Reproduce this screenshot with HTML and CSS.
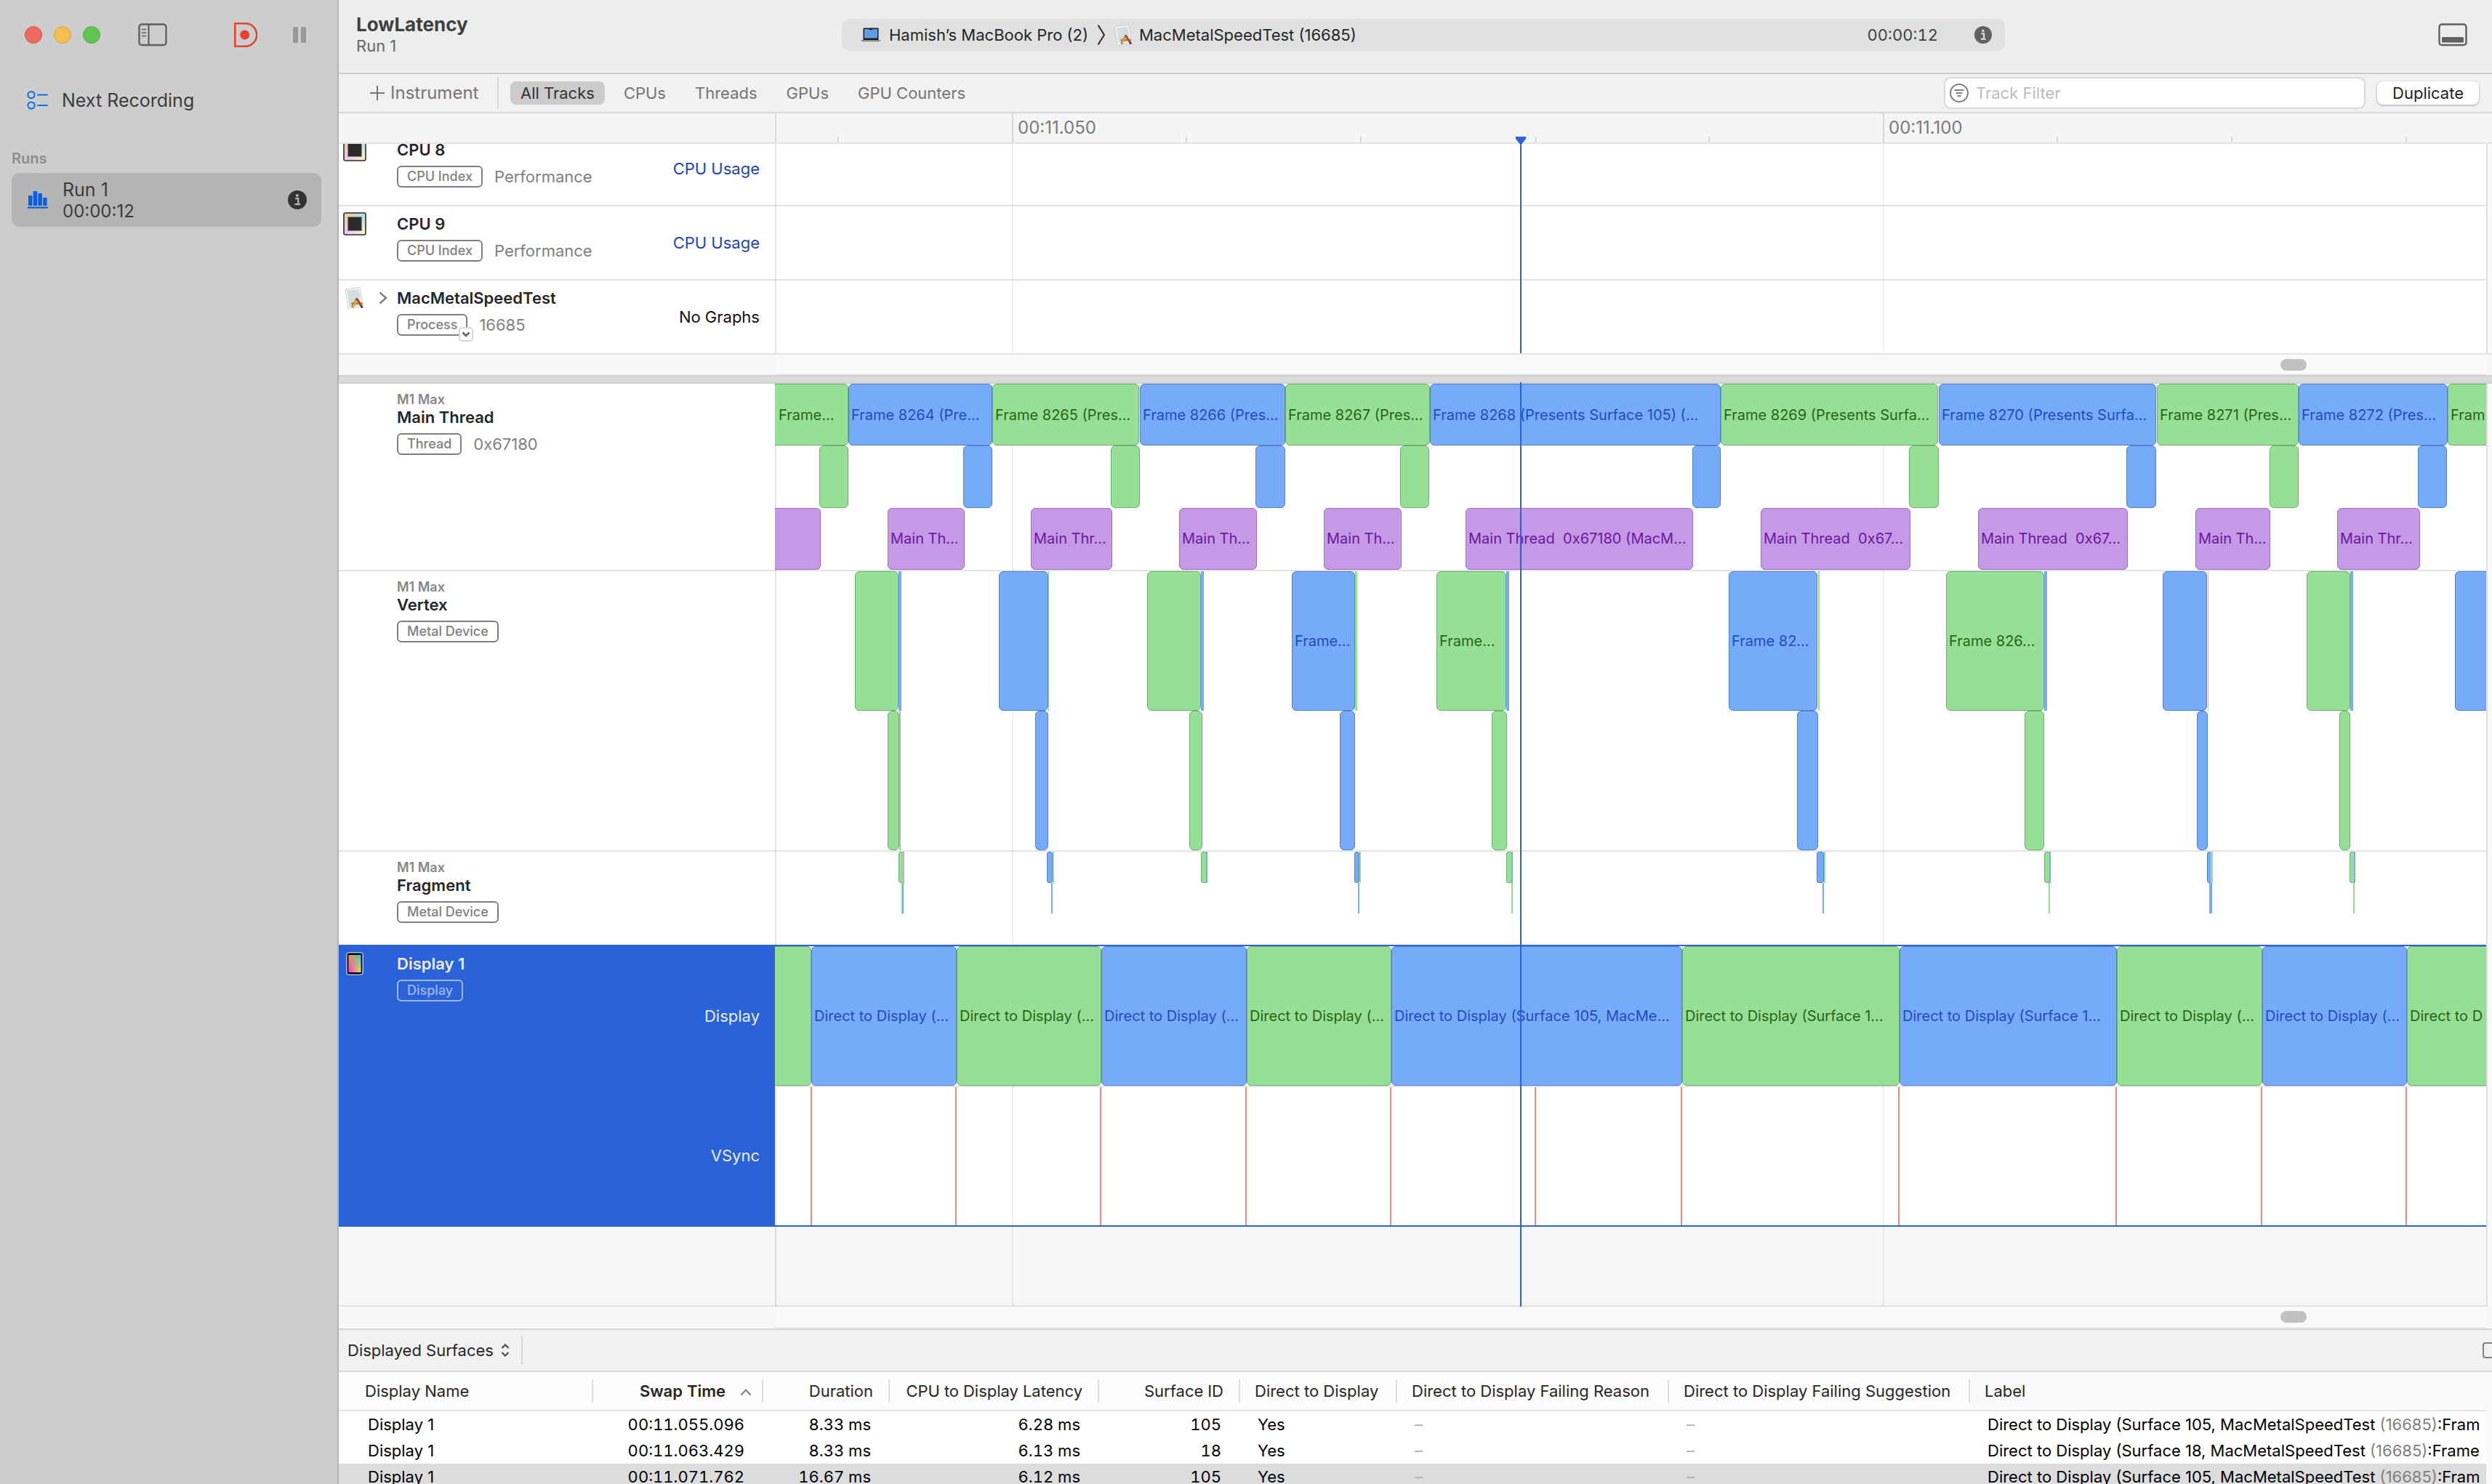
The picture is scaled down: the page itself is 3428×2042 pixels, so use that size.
FILE: index.html
```html
<!DOCTYPE html>
<html lang="en">
<head>
<meta charset="utf-8">
<title>LowLatency – Run 1</title>
<link rel="stylesheet" href="styles.css">
</head>
<body>
<svg class="defs" aria-hidden="true">
  <defs>
    <linearGradient id="chip-a" x1="0" y1="0" x2="1" y2="0"><stop offset="0" stop-color="#f9cf8f"/><stop offset="1" stop-color="#9fe4f5"/></linearGradient>
    <linearGradient id="chip-b" x1="0" y1="0" x2="1" y2="0"><stop offset="0" stop-color="#eec0fb"/><stop offset="1" stop-color="#fbf8b8"/></linearGradient>
    <linearGradient id="chip-fade" x1="0" y1="0" x2="0" y2="1"><stop offset="0.1" stop-color="#000"/><stop offset="0.9" stop-color="#fff"/></linearGradient>
    <mask id="chip-mask"><rect width="32" height="32" fill="url(#chip-fade)"/></mask>
    <linearGradient id="disp-a" x1="0" y1="0" x2="1" y2="0"><stop offset="0" stop-color="#f7a022"/><stop offset="1" stop-color="#35c4e8"/></linearGradient>
    <linearGradient id="disp-b" x1="0" y1="0" x2="1" y2="0"><stop offset="0" stop-color="#f02af0"/><stop offset="1" stop-color="#f6e832"/></linearGradient>
    <symbol id="chip" viewBox="0 0 32 32">
      <rect x="1" y="1" width="30" height="30" rx="2" fill="url(#chip-a)"/>
      <rect x="1" y="1" width="30" height="30" rx="2" fill="url(#chip-b)" mask="url(#chip-mask)"/>
      <rect x="1" y="1" width="30" height="30" rx="2" fill="none" stroke="#2d2a2e" stroke-width="1.6"/>
      <rect x="6.500" y="6.500" width="19" height="19" fill="#2d2a2e" stroke="#8d8a8a" stroke-width="0.8"/>
    </symbol>
    <symbol id="app" viewBox="0 0 32 32">
      <path d="M3 4 23 1.500 27 27 7 30.500Z" fill="#fff" stroke="#c9cccd" stroke-width="1"/>
      <path d="M5 5.500 21.700 3.400 25 25.500 8.500 28.300Z" fill="#d3dee3"/>
      <path d="M11 22h16v3.500H11Z" fill="#d8a765"/>
      <path d="M11 23.500h16" stroke="#a9773c" stroke-width="1"/>
      <path d="M19.500 16.500 12.500 29" stroke="#7c5a1e" stroke-width="3.200"/>
      <path d="M19.500 17 13 28.500" stroke="#f3c63f" stroke-width="1.800"/>
      <path d="M18.500 16.500 26.500 29.500" stroke="#a8422a" stroke-width="2.800"/>
      <path d="M24.500 26.500 26.500 29.500" stroke="#444" stroke-width="2.600"/>
    </symbol>
    <symbol id="info" viewBox="0 0 26 26">
      <circle cx="13" cy="13" r="13" fill="currentColor"/>
      <circle cx="12.800" cy="7" r="1.900" fill="var(--hole)"/>
      <path d="M10 11.200h4.200V19M9.600 19.200h7.400" fill="none" stroke="var(--hole)" stroke-width="2.200"/>
    </symbol>
  </defs>
</svg>

<div class="app">
  <aside class="sidebar">
    <div class="window-bar">
      <button class="light close" aria-label="Close"></button>
      <button class="light minimize" aria-label="Minimize"></button>
      <button class="light zoom" aria-label="Zoom"></button>
      <button class="icon-button sidebar-toggle" aria-label="Toggle sidebar">
        <svg width="40" height="32" viewBox="0 0 40 32" fill="none" stroke="#5f5f5f"><rect x="1.500" y="1.500" width="37" height="28.500" rx="3.500" stroke-width="2.400"/><path d="M14.500 2v28" stroke-width="2.200"/><path d="M5.500 8.500h5M5.500 13h5M5.500 17.500h5" stroke-width="1.600" stroke-linecap="round"/></svg>
      </button>
      <button class="icon-button record" aria-label="Record">
        <svg width="32" height="34" viewBox="0 0 32 34"><path d="M1.300 1.300h14.200a15.700 15.700 0 0 1 0 31.400H1.300Z" fill="none" stroke="#e3432f" stroke-width="2.600"/><circle cx="14.700" cy="17" r="6.500" fill="#e3432f"/></svg>
      </button>
      <button class="icon-button pause" aria-label="Pause">
        <svg width="18" height="22" viewBox="0 0 18 22" fill="#989898"><rect width="7" height="22" rx="1.500"/><rect x="11" width="7" height="22" rx="1.500"/></svg>
      </button>
    </div>
    <a class="next-recording" href="#next">
      <svg width="30" height="28" viewBox="0 0 30 28" fill="none" stroke="#0a6cf0" stroke-width="2"><circle cx="6" cy="6.500" r="4.600"/><circle cx="6" cy="21" r="4.600"/><path d="M15 6.500h13M15 21h13" stroke-linecap="round"/></svg>
      <span>Next Recording</span>
    </a>
    <h2 class="sidebar-heading">Runs</h2>
    <a class="run" href="#run-1">
      <svg width="28" height="24" viewBox="0 0 28 24" fill="#0a5fe0"><rect x="1" y="6" width="5.500" height="14" rx="1"/><rect x="7.700" y="0" width="5.500" height="20" rx="1"/><rect x="14.400" y="3" width="5.500" height="17" rx="1"/><rect x="21.100" y="9" width="5.500" height="11" rx="1"/><rect x="0" y="21.500" width="28" height="2.200"/></svg>
      <span class="run-text"><span>Run 1</span><time>00:00:12</time></span>
      <svg class="run-info" width="26" height="26"><use href="#info"/></svg>
    </a>
  </aside>

  <main class="main">
    <header class="title-bar">
      <div class="title">
        <h1>LowLatency</h1>
        <p>Run 1</p>
      </div>
      <div class="target">
        <svg width="28" height="20" viewBox="0 0 28 20"><path d="M3.500 1.500a1 1 0 0 1 1-1h19a1 1 0 0 1 1 1V17h-21Z" fill="#1b1b1d"/><rect x="5" y="2" width="18" height="12.500" fill="#5b9ee6"/><rect x="11.500" y="1" width="5" height="2" fill="#1b1b1d"/><path d="M0 17h28l-2 2.200H2Z" fill="#8c8d8e"/></svg>
        <span class="device">Hamish’s MacBook Pro (2)</span>
        <svg class="crumb" width="12" height="30" viewBox="0 0 12 30" fill="none" stroke="#2a2a2a" stroke-width="2"><path d="M1.500 1.500 10 15 1.500 28.500"/></svg>
        <svg width="30" height="30"><use href="#app"/></svg>
        <span class="process">MacMetalSpeedTest (16685)</span>
        <time class="elapsed">00:00:12</time>
        <svg class="target-info" width="24" height="24" viewBox="0 0 26 26"><use href="#info"/></svg>
      </div>
      <button class="icon-button detail-toggle" aria-label="Toggle detail area">
        <svg width="40" height="32" viewBox="0 0 40 32"><rect x="1.500" y="1.500" width="37" height="28.500" rx="3.500" fill="none" stroke="#5f6060" stroke-width="2.400"/><rect x="5" y="19" width="30" height="7.500" rx="1.500" fill="#5f6060"/></svg>
      </button>
    </header>

    <nav class="toolbar">
      <button class="add-instrument"><svg width="20" height="20" viewBox="0 0 20 20" stroke="#757575" stroke-width="2"><path d="M10 0v20M0 10h20"/></svg>Instrument</button>
      <div class="tabs">
        <button class="tab selected">All Tracks</button>
        <button class="tab">CPUs</button>
        <button class="tab">Threads</button>
        <button class="tab">GPUs</button>
        <button class="tab">GPU Counters</button>
      </div>
      <label class="filter">
        <svg width="26" height="26" viewBox="0 0 26 26" fill="none" stroke="#808080" stroke-width="2"><circle cx="13" cy="13" r="12"/><path d="M6.500 9h13M8.500 13h9M10.500 17h5"/></svg>
        <input type="text" placeholder="Track Filter" aria-label="Track Filter">
      </label>
      <button class="duplicate">Duplicate</button>
    </nav>

    <div class="ruler">
      <div class="ruler-head"></div>
      <div class="ruler-scale">
        <span class="tick" style="--x:84"></span>
        <span class="tick major" style="--x:324">00:11.050</span>
        <span class="tick" style="--x:563"></span>
        <span class="tick" style="--x:803"></span>
        <span class="tick" style="--x:1044"></span>
        <span class="tick" style="--x:1282"></span>
        <span class="tick major" style="--x:1522">00:11.100</span>
        <span class="tick" style="--x:1761"></span>
        <span class="tick" style="--x:2001"></span>
        <span class="tick" style="--x:2241"></span>
        <span class="playhead-handle" style="--x:1024"></span>
      </div>
    </div>

    <section class="pane upper">
      <div class="grid-lines"><i style="--x:324"></i><i style="--x:1522"></i></div>
      <div class="rows">
        <div class="track">
          <div class="head">
            <svg class="head-icon" width="32" height="32"><use href="#chip"/></svg>
            <div class="head-text"><h3>CPU 8</h3><p><span class="tag">CPU Index</span>Performance</p></div>
            <button class="graph link">CPU Usage</button>
          </div>
        </div>
        <div class="track">
          <div class="head">
            <svg class="head-icon" width="32" height="32"><use href="#chip"/></svg>
            <div class="head-text"><h3>CPU 9</h3><p><span class="tag">CPU Index</span>Performance</p></div>
            <button class="graph link">CPU Usage</button>
          </div>
        </div>
        <div class="track">
          <div class="head">
            <span class="head-icon"><svg width="32" height="32"><use href="#app"/></svg><svg class="disclosure" width="12" height="18" viewBox="0 0 12 18" fill="none" stroke="#808080" stroke-width="2.400"><path d="M1.500 1.500 10 9l-8.500 7.500"/></svg></span>
            <div class="head-text"><h3>MacMetalSpeedTest</h3><p><span class="tag">Process<button class="tag-menu" aria-label="Process options"><svg width="12" height="8" viewBox="0 0 12 8" fill="none" stroke="#666" stroke-width="2.800"><path d="M1.500 1.500 6 6l4.500-4.500"/></svg></button></span>16685</p></div>
            <span class="graph none">No Graphs</span>
          </div>
        </div>
      </div>
      <div class="playhead"><i style="--x:1023"></i></div>
    </section>
    <div class="scroll-strip"><div></div><div class="scroll-area"><span class="thumb" style="--x:2069"></span></div></div>
    <div class="divider"></div>

    <section class="pane lower">
      <div class="grid-lines"><i style="--x:324"></i><i style="--x:1522"></i></div>
      <div class="track thread">
        <div class="head"><div class="head-text"><h4>M1 Max</h4><h3>Main Thread</h3><p><span class="tag">Thread</span>0x67180</p></div></div>
        <div class="plot">
          <div class="lane">
            <span class="slice green cut-left" style="--x:-2;--w:101">Frame…</span>
            <span class="slice blue" style="--x:99;--w:198">Frame 8264 (Pre…</span>
            <span class="slice green" style="--x:297;--w:202">Frame 8265 (Pres…</span>
            <span class="slice blue" style="--x:500;--w:200">Frame 8266 (Pres…</span>
            <span class="slice green" style="--x:700;--w:199">Frame 8267 (Pres…</span>
            <span class="slice blue" style="--x:899;--w:400">Frame 8268 (Presents Surface 105) (…</span>
            <span class="slice green" style="--x:1299;--w:299">Frame 8269 (Presents Surfa…</span>
            <span class="slice blue" style="--x:1599;--w:299">Frame 8270 (Presents Surfa…</span>
            <span class="slice green" style="--x:1899;--w:195">Frame 8271 (Pres…</span>
            <span class="slice blue" style="--x:2094;--w:205">Frame 8272 (Pres…</span>
            <span class="slice green cut-right" style="--x:2299;--w:53">Fram</span>
          </div>
          <div class="lane">
            <span class="slice green" style="--x:59;--w:40"></span>
            <span class="slice blue" style="--x:257;--w:40"></span>
            <span class="slice green" style="--x:460;--w:40"></span>
            <span class="slice blue" style="--x:659;--w:41"></span>
            <span class="slice green" style="--x:858;--w:40"></span>
            <span class="slice blue" style="--x:1260;--w:39"></span>
            <span class="slice green" style="--x:1558;--w:41"></span>
            <span class="slice blue" style="--x:1857;--w:41"></span>
            <span class="slice green" style="--x:2054;--w:40"></span>
            <span class="slice blue" style="--x:2258;--w:40"></span>
          </div>
          <div class="lane">
            <span class="slice purple cut-left" style="--x:-2;--w:63"></span>
            <span class="slice purple" style="--x:153;--w:106">Main Th…</span>
            <span class="slice purple" style="--x:350;--w:112">Main Thr…</span>
            <span class="slice purple" style="--x:554;--w:107">Main Th…</span>
            <span class="slice purple" style="--x:753;--w:107">Main Th…</span>
            <span class="slice purple" style="--x:948;--w:313">Main Thread&nbsp; 0x67180 (MacM…</span>
            <span class="slice purple" style="--x:1354;--w:206">Main Thread&nbsp; 0x67…</span>
            <span class="slice purple" style="--x:1653;--w:206">Main Thread&nbsp; 0x67…</span>
            <span class="slice purple" style="--x:1952;--w:103">Main Th…</span>
            <span class="slice purple" style="--x:2147;--w:114">Main Thr…</span>
          </div>
        </div>
      </div>

      <div class="track vertex">
        <div class="head"><div class="head-text"><h4>M1 Max</h4><h3>Vertex</h3><p><span class="tag">Metal Device</span></p></div></div>
        <div class="plot">
          <div class="lane">
            <span class="slice green" style="--x:108;--w:60"></span><span class="sliver blue" style="--x:168;--w:4"></span>
            <span class="slice blue" style="--x:306;--w:68"></span><span class="sliver green" style="--x:374;--w:1"></span>
            <span class="slice green" style="--x:510;--w:74"></span><span class="sliver blue" style="--x:584;--w:4"></span>
            <span class="slice blue" style="--x:709;--w:87">Frame…</span><span class="sliver green" style="--x:796;--w:3"></span>
            <span class="slice green" style="--x:908;--w:96">Frame…</span><span class="sliver blue" style="--x:1004;--w:4"></span>
            <span class="slice blue" style="--x:1310;--w:122">Frame 82…</span><span class="sliver green" style="--x:1433;--w:2"></span>
            <span class="slice green" style="--x:1609;--w:135">Frame 826…</span><span class="sliver blue" style="--x:1744;--w:4"></span>
            <span class="slice blue" style="--x:1907;--w:61"></span><span class="sliver green" style="--x:1969;--w:1"></span>
            <span class="slice green" style="--x:2105;--w:60"></span><span class="sliver blue" style="--x:2165;--w:4"></span>
            <span class="slice blue cut-right" style="--x:2309;--w:43"></span>
          </div>
          <div class="lane">
            <span class="slice green" style="--x:153;--w:16"></span><span class="sliver gray" style="--x:169;--w:2"></span>
            <span class="slice blue" style="--x:356;--w:18"></span>
            <span class="slice green" style="--x:568;--w:18"></span>
            <span class="slice blue" style="--x:775;--w:21"></span>
            <span class="slice green" style="--x:984;--w:21"></span>
            <span class="slice blue" style="--x:1404;--w:29"></span>
            <span class="slice green" style="--x:1717;--w:27"></span>
            <span class="slice blue" style="--x:1954;--w:15"></span>
            <span class="slice green" style="--x:2150;--w:15"></span>
          </div>
        </div>
      </div>

      <div class="track fragment">
        <div class="head"><div class="head-text"><h4>M1 Max</h4><h3>Fragment</h3><p><span class="tag">Metal Device</span></p></div></div>
        <div class="plot">
          <div class="lane">
            <span class="slice green" style="--x:168;--w:7"></span><span class="sliver gray" style="--x:174;--w:2"></span>
            <span class="slice blue" style="--x:372;--w:8"></span><span class="sliver green" style="--x:380;--w:2"></span>
            <span class="slice green" style="--x:584;--w:8"></span><span class="sliver blue" style="--x:591;--w:2"></span>
            <span class="slice blue" style="--x:795;--w:7"></span><span class="sliver green" style="--x:802;--w:2"></span>
            <span class="slice green" style="--x:1004;--w:8"></span><span class="sliver blue" style="--x:1011;--w:2"></span>
            <span class="slice blue" style="--x:1431;--w:10"></span><span class="sliver green" style="--x:1441;--w:2"></span>
            <span class="slice green" style="--x:1744;--w:8"></span><span class="sliver blue" style="--x:1751;--w:2"></span>
            <span class="slice blue" style="--x:1968;--w:6"></span><span class="sliver green" style="--x:1973;--w:3"></span>
            <span class="slice green" style="--x:2164;--w:7"></span><span class="sliver blue" style="--x:2170;--w:2"></span>
          </div>
          <div class="lane">
            <span class="sliver green" style="--x:172;--w:1"></span><span class="sliver blue" style="--x:173;--w:2"></span>
            <span class="sliver blue" style="--x:378;--w:2"></span>
            <span class="sliver blue" style="--x:800;--w:2"></span>
            <span class="sliver green" style="--x:1011;--w:2"></span>
            <span class="sliver blue" style="--x:1439;--w:2"></span>
            <span class="sliver green" style="--x:1750;--w:2"></span>
            <span class="sliver blue" style="--x:1971;--w:4"></span>
            <span class="sliver green" style="--x:2169;--w:2"></span>
          </div>
          <div class="lane"></div>
        </div>
      </div>

      <div class="track display selected">
        <div class="head">
          <svg class="head-icon screen" width="24" height="32" viewBox="0 0 24 32"><rect x="0.800" y="0.800" width="22.400" height="30.400" rx="3.500" fill="#000" stroke="#a9bff0" stroke-width="1.600"/><rect x="3.500" y="4" width="17" height="24" fill="url(#disp-a)"/><g transform="scale(.75 1)"><rect x="4.700" y="4" width="22.600" height="24" fill="url(#disp-b)" mask="url(#chip-mask)"/></g></svg>
          <div class="head-text"><h3>Display 1</h3><p><span class="tag">Display</span></p></div>
          <div class="lane-names"><span>Display</span><span>VSync</span></div>
        </div>
        <div class="plot">
          <div class="lane">
            <span class="slice green cut-left" style="--x:-2;--w:50"></span>
            <span class="slice blue" style="--x:48;--w:200">Direct to Display (…</span>
            <span class="slice green" style="--x:248;--w:199">Direct to Display (…</span>
            <span class="slice blue" style="--x:447;--w:200">Direct to Display (…</span>
            <span class="slice green" style="--x:647;--w:199">Direct to Display (…</span>
            <span class="slice blue" style="--x:846;--w:400">Direct to Display (Surface 105, MacMe…</span>
            <span class="slice green" style="--x:1246;--w:299">Direct to Display (Surface 1…</span>
            <span class="slice blue" style="--x:1545;--w:299">Direct to Display (Surface 1…</span>
            <span class="slice green" style="--x:1844;--w:200">Direct to Display (…</span>
            <span class="slice blue" style="--x:2044;--w:199">Direct to Display (…</span>
            <span class="slice green cut-right" style="--x:2243;--w:109">Direct to D</span>
          </div>
          <div class="lane vsync">
            <i style="--x:47"></i><i style="--x:246"></i><i style="--x:445"></i><i style="--x:645"></i><i style="--x:844"></i><i style="--x:1043"></i><i style="--x:1244"></i><i style="--x:1543"></i><i style="--x:1842"></i><i style="--x:2042"></i><i style="--x:2241"></i>
          </div>
        </div>
      </div>
      <div class="empty"></div>
      <div class="playhead"><i style="--x:1023"></i></div>
    </section>
    <div class="scroll-strip bottom"><div></div><div class="scroll-area"><span class="thumb" style="--x:2069"></span></div></div>

    <section class="detail">
      <div class="detail-bar">
        <label class="detail-picker">
          <select aria-label="Detail view"><option>Displayed Surfaces</option></select>
          <svg width="12" height="18" viewBox="0 0 12 18" fill="none" stroke="#4a4a4a" stroke-width="2.200"><path d="M1.500 6 6 1.500 10.500 6M1.500 12 6 16.500 10.500 12"/></svg>
        </label>
        <span class="detail-edge"></span>
      </div>
      <table class="surfaces">
        <colgroup><col class="c-name"><col class="c-swap"><col class="c-duration"><col class="c-latency"><col class="c-surface"><col class="c-direct"><col class="c-reason"><col class="c-suggestion"><col></colgroup>
        <thead>
          <tr><th>Display Name</th><th class="num sorted">Swap Time<svg width="16" height="10" viewBox="0 0 16 10" fill="none" stroke="#808080" stroke-width="2"><path d="M1.500 8.500 8 1.500l6.500 7"/></svg></th><th class="num">Duration</th><th class="num">CPU to Display Latency</th><th class="num">Surface ID</th><th>Direct to Display</th><th>Direct to Display Failing Reason</th><th>Direct to Display Failing Suggestion</th><th>Label</th></tr>
        </thead>
        <tbody>
          <tr><td>Display 1</td><td class="num">00:11.055.096</td><td class="num">8.33 ms</td><td class="num">6.28 ms</td><td class="num">105</td><td>Yes</td><td class="dim">–</td><td class="dim">–</td><td>Direct to Display (Surface 105, MacMetalSpeedTest <span>(16685)</span>:Fram</td></tr>
          <tr><td>Display 1</td><td class="num">00:11.063.429</td><td class="num">8.33 ms</td><td class="num">6.13 ms</td><td class="num">18</td><td>Yes</td><td class="dim">–</td><td class="dim">–</td><td>Direct to Display (Surface 18, MacMetalSpeedTest <span>(16685)</span>:Frame</td></tr>
          <tr class="current"><td>Display 1</td><td class="num">00:11.071.762</td><td class="num">16.67 ms</td><td class="num">6.12 ms</td><td class="num">105</td><td>Yes</td><td class="dim">–</td><td class="dim">–</td><td>Direct to Display (Surface 105, MacMetalSpeedTest <span>(16685)</span>:Fram</td></tr>
        </tbody>
      </table>
    </section>
  </main>
</div>
</body>
</html>
```

FILE: styles.css
```css
:root {
  --line: #e3e3e3;
  --accent: #2962d9;
  --span: 2352;
  --head: 600px;
}

* { box-sizing: border-box; }

body {
  margin: 0;
  font-family: Inter, "Liberation Sans", sans-serif;
  font-size: 22px;
  line-height: 26px;
  color: #262626;
}

h1, h2, h3, h4, p { margin: 0; font-size: inherit; font-weight: inherit; }
button, input, select { font: inherit; color: inherit; border: 0; padding: 0; margin: 0; background: none; }
a { color: inherit; text-decoration: none; }
svg { display: block; flex: none; }
i { font-style: normal; }
.defs { position: absolute; width: 0; height: 0; }

.app {
  display: grid;
  grid-template-columns: 466px minmax(0, 1fr);
  height: 100vh;
  overflow: hidden;
}

/* Sidebar */
.sidebar {
  background: #cdcdcd;
  border-right: 2px solid #b4b4b4;
  padding: 0 22px 0 16px;
  font-size: 24px;
  color: #3c3c3c;
}
.window-bar { display: flex; align-items: center; height: 96px; padding-left: 18px; }
.light { width: 24px; height: 24px; border-radius: 50%; margin-right: 16px; }
.close { background: #ed6a5e; border: 1px solid #d55549; }
.minimize { background: #f5bf4f; border: 1px solid #d6a243; }
.zoom { background: #61c554; border: 1px solid #52a842; }
.sidebar-toggle { margin-left: 36px; }
.record { margin-left: 92px; }
.pause { margin-left: 49px; }
.next-recording {
  display: flex;
  align-items: center;
  gap: 18px;
  height: 54px;
  margin-top: 15px;
  padding-left: 21px;
  font-size: 25px;
}
.sidebar-heading { margin-top: 40px; font-size: 20px; font-weight: 600; color: #8c8c8c; }
.run {
  display: flex;
  align-items: center;
  height: 74px;
  margin-top: 7px;
  padding: 0 20px 0 22px;
  border-radius: 10px;
  background: #b4b4b4;
}
.run-text { display: grid; line-height: 30px; margin-left: 20px; padding-top: 2px; }
.run-text span { font-size: 25px; }
.run-info { margin-left: auto; color: #333; --hole: #b4b4b4; }

/* Title bar */
.main { display: flex; flex-direction: column; min-width: 0; background: #fafafa; }
.title-bar {
  display: flex;
  align-items: center;
  flex: none;
  height: 102px;
  padding: 0 34px 4px 24px;
  border-bottom: 2px solid #c9cccb;
  background: #ebeeed;
}
.title { flex: 0 0 668px; line-height: 28px; color: #666; }
.title h1 { font-size: 26px; font-weight: 700; line-height: 30px; color: #404040; }
.target {
  display: flex;
  align-items: center;
  flex: 0 1 1600px;
  height: 44px;
  padding: 0 18px 0 26px;
  border-radius: 10px;
  background: #dfe1e0;
}
.device { margin-left: 11px; }
.crumb { margin: 0 10px 0 12px; }
.process { margin-left: 6px; }
.elapsed { margin-left: auto; margin-right: 50px; color: #404040; font-variant-numeric: tabular-nums; }
.target-info { color: #5f6060; --hole: #dfe1e0; }
.detail-toggle { margin-left: auto; }

/* Toolbar */
.toolbar {
  display: flex;
  align-items: center;
  flex: none;
  height: 54px;
  padding-right: 18px;
  border-bottom: 2px solid #d8d8d8;
  background: #f1f1f1;
  color: #757575;
}
.add-instrument {
  display: flex;
  align-items: center;
  gap: 8px;
  width: 220px;
  height: 44px;
  padding-left: 43px;
  border-right: 2px solid #d8d8d8;
  font-size: 24px;
}
.tabs { display: flex; gap: 12px; margin-left: 16px; }
.tab { height: 32px; padding: 0 14px; border-radius: 8px; }
.tab.selected { background: #cbcbcb; color: #333; }
.filter {
  display: flex;
  align-items: center;
  gap: 10px;
  width: 580px;
  height: 44px;
  margin-left: auto;
  padding: 0 6px;
  border: 2px solid #d9d9d9;
  border-radius: 10px;
  background: #fff;
}
.filter input { flex: 1; min-width: 0; outline: 0; }
.filter input::placeholder { color: #bcbcbc; opacity: 1; }
.duplicate {
  height: 32px;
  margin-left: 16px;
  padding: 0 21px;
  border-radius: 8px;
  background: #fff;
  box-shadow: 0 1px 3px rgb(0 0 0 / 35%);
  color: #222;
}

/* Ruler */
.ruler {
  display: grid;
  grid-template-columns: var(--head) minmax(0, 1fr);
  flex: none;
  height: 42px;
  border-bottom: 2px solid var(--line);
  background: #f4f5f5;
}
.ruler-scale { position: relative; margin-right: 8px; border-left: 2px solid #dcdcdc; }
.tick {
  position: absolute;
  left: calc(var(--x) * 100% / var(--span));
  bottom: 0;
  height: 8px;
  border-left: 2px solid #d6d6d6;
}
.tick.major { height: 40px; padding-left: 6px; font-size: 24px; line-height: 40px; color: #7b7b7b; }
.playhead-handle {
  position: absolute;
  left: calc(var(--x) * 100% / var(--span));
  bottom: -2px;
  width: 14px;
  height: 10px;
  margin-left: -7px;
  background: var(--accent);
  clip-path: polygon(0 0, 100% 0, 100% 30%, 60% 100%, 40% 100%, 0 30%);
}

/* Track panes */
.pane { position: relative; flex: none; padding-right: 8px; }
.upper { height: 290px; overflow: hidden; border-bottom: 2px solid var(--line); }
.upper .rows { margin-top: -16px; }
.grid-lines, .playhead {
  position: absolute;
  inset: 0 6px 0 var(--head);
  border: 2px solid rgb(0 0 0 / 11%);
  border-width: 0 2px;
  z-index: 1;
  pointer-events: none;
}
.playhead { border-color: transparent; z-index: 3; }
.grid-lines i, .playhead i {
  position: absolute;
  inset: 0 auto 0 calc(var(--x) * 100% / var(--span));
  width: 2px;
  background: rgb(0 0 0 / 5%);
}
.playhead i { background: var(--accent); }
.lower .playhead { top: -2px; }

.track {
  display: grid;
  grid-template-columns: var(--head) minmax(0, 1fr);
  border-bottom: 2px solid var(--line);
  background: #fff;
}
.upper .track { height: 102px; }
.thread { height: 258px; }
.vertex { height: 386px; }
.fragment { height: 128px; border-bottom: 0; }
.display { height: 388px; border: solid var(--accent); border-width: 2px 0; }

.head { display: grid; grid-template-columns: 80px 1fr auto; padding-right: 21px; }
.head-icon { grid-column: 1; margin: 8px 0 0 6px; }
.head-icon.screen { margin-left: 10px; }
span.head-icon { display: flex; align-items: center; align-self: start; gap: 17px; }
.head-text { grid-column: 2; padding-top: 11px; }
.head-text h4 { font-size: 18px; line-height: 22px; font-weight: 600; color: #868686; }
.head-text h3 { font-weight: 600; }
.head-text p { display: flex; align-items: center; gap: 16px; margin-top: 9px; color: #808080; }
.tag {
  position: relative;
  height: 30px;
  padding: 0 12px;
  border: 2px solid #808080;
  border-radius: 6px;
  font-size: 18px;
  line-height: 26px;
  font-weight: 500;
}
.tag-menu {
  position: absolute;
  right: -10px;
  bottom: -10px;
  display: grid;
  place-items: center;
  width: 20px;
  height: 20px;
  border: 2px solid #d5d5d5;
  border-radius: 5px;
  background: #fff;
}
.graph { align-self: center; color: #111; }
.graph.link { color: #1d45b8; }

.selected .head { background: var(--accent); }
.selected h3, .lane-names { color: #e8eefb; }
.selected .tag { border-color: #a0b7ee; color: #a0b7ee; }
.lane-names { display: grid; grid-auto-rows: 1fr; align-items: center; text-align: right; }

.plot { display: grid; grid-auto-rows: 1fr; margin-left: 2px; }
.lane { position: relative; }
.slice, .sliver {
  position: absolute;
  top: 0;
  bottom: 0;
  left: calc(var(--x) * 100% / var(--span));
  width: calc(var(--w) * 100% / var(--span));
  z-index: 2;
}
.slice {
  display: flex;
  align-items: center;
  padding-left: 3px;
  overflow: hidden;
  border: 1px solid;
  border-radius: 6px;
  font-size: 20px;
  white-space: nowrap;
}
.fragment .slice { border-radius: 3px; }
.green { background: #96df96; border-color: #6fae6f; color: #2a6413; }
.blue { background: #76abf9; border-color: #4f82c8; color: #1f4bc0; }
.purple { background: #c599e6; border-color: #9a70b8; color: #6b179e; }
.gray { background: #b9b9b9; }
.slice.cut-left { padding-left: 5px; border-left: 0; border-radius: 0 6px 6px 0; }
.slice.cut-right { border-right: 0; border-radius: 6px 0 0 6px; }
.vsync { border-top: 2px solid var(--line); }
.vsync i {
  position: absolute;
  inset: 0 auto 0 calc(var(--x) * 100% / var(--span));
  width: 2px;
  background: #ec8983;
}
.empty { height: 110px; background: #f7f7f7; }
.lower .empty { border-bottom: 2px solid var(--line); }

.scroll-strip {
  display: grid;
  grid-template-columns: var(--head) minmax(0, 1fr);
  flex: none;
  height: 28px;
  background: #f7f7f7;
}
.scroll-strip.bottom { height: 30px; }
.scroll-area { position: relative; padding-top: 6px; margin-right: 8px; background: #fafafa; border-bottom: 2px solid #ececec; }
.thumb {
  display: block;
  width: 36px;
  height: 16px;
  margin-left: calc(var(--x) * 100% / var(--span));
  border-radius: 8px;
  background: #c1c1c1;
}
.divider { flex: none; height: 12px; border: solid #d0d0d0; border-width: 2px 0; background: #dadada; }

/* Detail area */
.detail { flex: 1; min-height: 0; overflow: hidden; border-top: 2px solid #d2d2d2; }
.detail-bar {
  display: flex;
  align-items: center;
  justify-content: space-between;
  height: 58px;
  border-bottom: 2px solid #d8d8d8;
  background: #f1f1f1;
}
.detail-picker { display: flex; align-items: center; gap: 10px; height: 40px; padding: 0 16px 0 12px; border-right: 2px solid #d8d8d8; }
.detail-picker select { appearance: none; }
.detail-edge { width: 13px; height: 22px; border: 2px solid #808080; border-right: 0; border-radius: 4px 0 0 4px; }
.surfaces {
  width: calc(100% - 8px);
  table-layout: fixed;
  border-collapse: separate;
  border-spacing: 0;
  background: #fff;
}
.c-name { width: 350px; }
.c-swap { width: 234px; }
.c-duration { width: 174px; }
.c-latency { width: 288px; }
.c-surface { width: 194px; }
.c-direct { width: 216px; }
.c-reason { width: 374px; }
.c-suggestion { width: 414px; }
.surfaces th, .surfaces td { padding: 0 23px 0 20px; text-align: left; white-space: nowrap; overflow: hidden; font-weight: 400; }
.surfaces th {
  height: 54px;
  border-bottom: 2px solid var(--line);
  background: linear-gradient(#dedede, #dedede) right 0 center / 2px 32px no-repeat #fcfcfc;
}
.surfaces th:last-child { background: #fafafa; }
.surfaces td { height: 36px; padding: 0 26px 0 24px; line-height: 36px; color: #000; }
.surfaces th:first-child { padding-left: 36px; }
.surfaces td:first-child { padding-left: 40px; }
.surfaces .num { text-align: right; font-variant-numeric: tabular-nums; }
.surfaces .sorted { font-weight: 600; padding-right: 16px; }
.sorted svg { display: inline-block; margin-left: 20px; vertical-align: middle; }
.surfaces .dim, .surfaces td span { color: #808080; }
.surfaces .dim { color: #b0b0b0; }
.surfaces td:last-child { padding-right: 0; }
.current { background: #dcdcdc; }
```
